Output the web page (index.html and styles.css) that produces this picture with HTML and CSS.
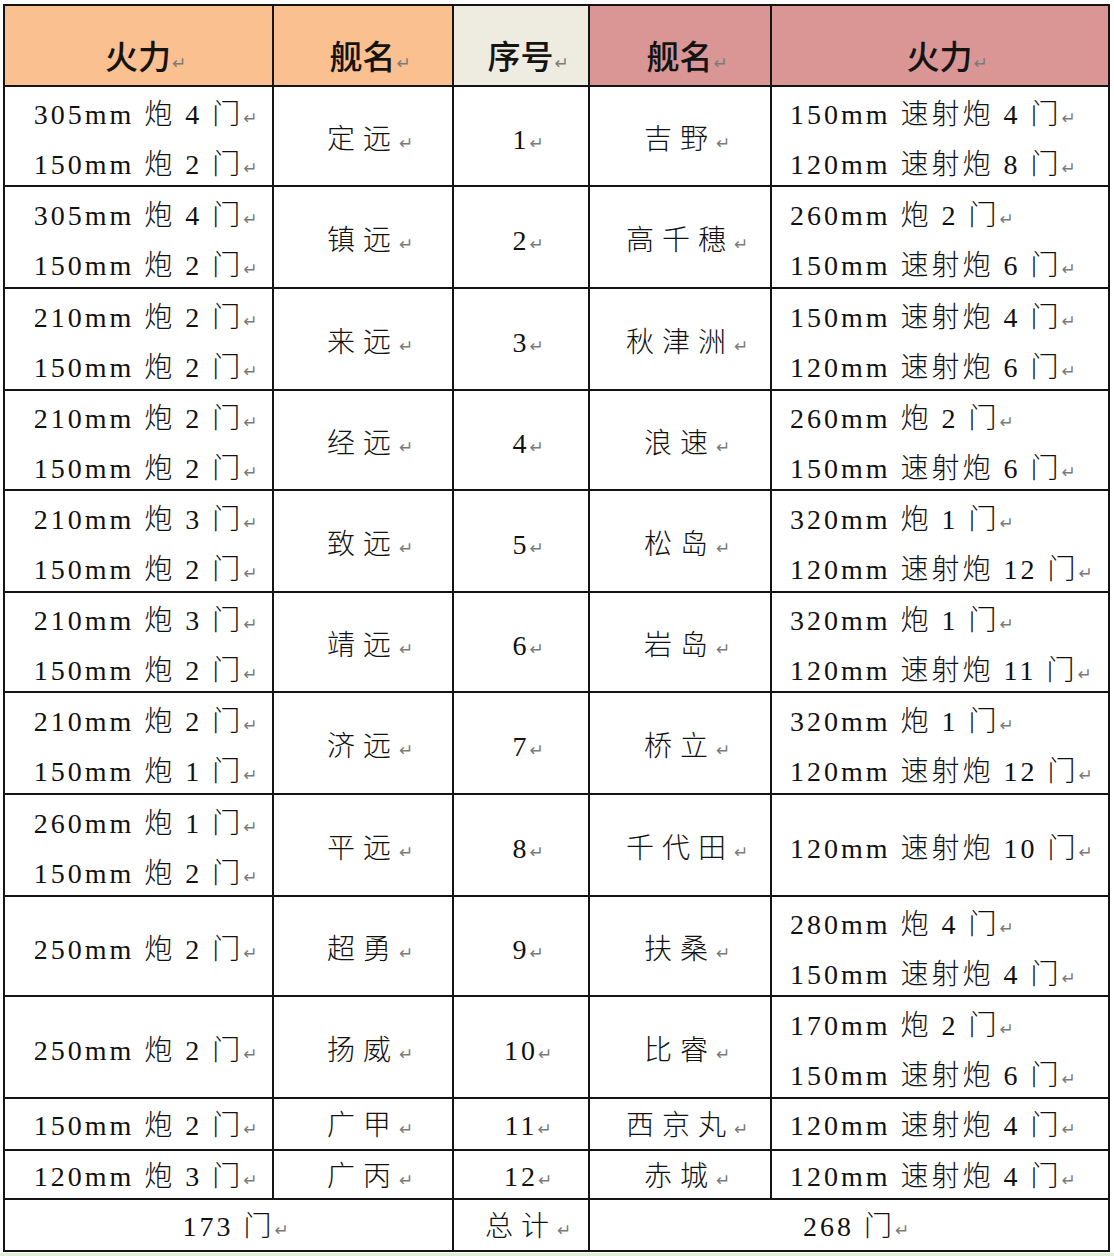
FILE: index.html
```html
<!DOCTYPE html>
<html lang="zh-CN">
<head>
<meta charset="utf-8">
<title>舰队火力对比</title>
<link rel="stylesheet" href="styles.css">
</head>
<body>
<div class="t">
  <div class="c h or"><div class="ln">火力<i class="pm">↵</i></div></div>
  <div class="c h or"><div class="ln">舰名<i class="pm">↵</i></div></div>
  <div class="c h bg"><div class="ln">序号<i class="pm">↵</i></div></div>
  <div class="c h rd"><div class="ln">舰名<i class="pm">↵</i></div></div>
  <div class="c h rd"><div class="ln">火力<i class="pm">↵</i></div></div>

  <div class="c"><div class="ln">305mm 炮 4 门<i class="pm">↵</i></div><div class="ln">150mm 炮 2 门<i class="pm">↵</i></div></div>
  <div class="c nm"><div class="ln">定远<i class="pm">↵</i></div></div>
  <div class="c"><div class="ln">1<i class="pm">↵</i></div></div>
  <div class="c nm"><div class="ln">吉野<i class="pm">↵</i></div></div>
  <div class="c l"><div class="ln">150mm 速射炮 4 门<i class="pm">↵</i></div><div class="ln">120mm 速射炮 8 门<i class="pm">↵</i></div></div>

  <div class="c"><div class="ln">305mm 炮 4 门<i class="pm">↵</i></div><div class="ln">150mm 炮 2 门<i class="pm">↵</i></div></div>
  <div class="c nm"><div class="ln">镇远<i class="pm">↵</i></div></div>
  <div class="c"><div class="ln">2<i class="pm">↵</i></div></div>
  <div class="c nm"><div class="ln">高千穗<i class="pm">↵</i></div></div>
  <div class="c l"><div class="ln">260mm 炮 2 门<i class="pm">↵</i></div><div class="ln">150mm 速射炮 6 门<i class="pm">↵</i></div></div>

  <div class="c"><div class="ln">210mm 炮 2 门<i class="pm">↵</i></div><div class="ln">150mm 炮 2 门<i class="pm">↵</i></div></div>
  <div class="c nm"><div class="ln">来远<i class="pm">↵</i></div></div>
  <div class="c"><div class="ln">3<i class="pm">↵</i></div></div>
  <div class="c nm"><div class="ln">秋津洲<i class="pm">↵</i></div></div>
  <div class="c l"><div class="ln">150mm 速射炮 4 门<i class="pm">↵</i></div><div class="ln">120mm 速射炮 6 门<i class="pm">↵</i></div></div>

  <div class="c"><div class="ln">210mm 炮 2 门<i class="pm">↵</i></div><div class="ln">150mm 炮 2 门<i class="pm">↵</i></div></div>
  <div class="c nm"><div class="ln">经远<i class="pm">↵</i></div></div>
  <div class="c"><div class="ln">4<i class="pm">↵</i></div></div>
  <div class="c nm"><div class="ln">浪速<i class="pm">↵</i></div></div>
  <div class="c l"><div class="ln">260mm 炮 2 门<i class="pm">↵</i></div><div class="ln">150mm 速射炮 6 门<i class="pm">↵</i></div></div>

  <div class="c"><div class="ln">210mm 炮 3 门<i class="pm">↵</i></div><div class="ln">150mm 炮 2 门<i class="pm">↵</i></div></div>
  <div class="c nm"><div class="ln">致远<i class="pm">↵</i></div></div>
  <div class="c"><div class="ln">5<i class="pm">↵</i></div></div>
  <div class="c nm"><div class="ln">松岛<i class="pm">↵</i></div></div>
  <div class="c l"><div class="ln">320mm 炮 1 门<i class="pm">↵</i></div><div class="ln">120mm 速射炮 12 门<i class="pm">↵</i></div></div>

  <div class="c"><div class="ln">210mm 炮 3 门<i class="pm">↵</i></div><div class="ln">150mm 炮 2 门<i class="pm">↵</i></div></div>
  <div class="c nm"><div class="ln">靖远<i class="pm">↵</i></div></div>
  <div class="c"><div class="ln">6<i class="pm">↵</i></div></div>
  <div class="c nm"><div class="ln">岩岛<i class="pm">↵</i></div></div>
  <div class="c l"><div class="ln">320mm 炮 1 门<i class="pm">↵</i></div><div class="ln">120mm 速射炮 11 门<i class="pm">↵</i></div></div>

  <div class="c"><div class="ln">210mm 炮 2 门<i class="pm">↵</i></div><div class="ln">150mm 炮 1 门<i class="pm">↵</i></div></div>
  <div class="c nm"><div class="ln">济远<i class="pm">↵</i></div></div>
  <div class="c"><div class="ln">7<i class="pm">↵</i></div></div>
  <div class="c nm"><div class="ln">桥立<i class="pm">↵</i></div></div>
  <div class="c l"><div class="ln">320mm 炮 1 门<i class="pm">↵</i></div><div class="ln">120mm 速射炮 12 门<i class="pm">↵</i></div></div>

  <div class="c"><div class="ln">260mm 炮 1 门<i class="pm">↵</i></div><div class="ln">150mm 炮 2 门<i class="pm">↵</i></div></div>
  <div class="c nm"><div class="ln">平远<i class="pm">↵</i></div></div>
  <div class="c"><div class="ln">8<i class="pm">↵</i></div></div>
  <div class="c nm"><div class="ln">千代田<i class="pm">↵</i></div></div>
  <div class="c l"><div class="ln">120mm 速射炮 10 门<i class="pm">↵</i></div></div>

  <div class="c"><div class="ln">250mm 炮 2 门<i class="pm">↵</i></div></div>
  <div class="c nm"><div class="ln">超勇<i class="pm">↵</i></div></div>
  <div class="c"><div class="ln">9<i class="pm">↵</i></div></div>
  <div class="c nm"><div class="ln">扶桑<i class="pm">↵</i></div></div>
  <div class="c l"><div class="ln">280mm 炮 4 门<i class="pm">↵</i></div><div class="ln">150mm 速射炮 4 门<i class="pm">↵</i></div></div>

  <div class="c"><div class="ln">250mm 炮 2 门<i class="pm">↵</i></div></div>
  <div class="c nm"><div class="ln">扬威<i class="pm">↵</i></div></div>
  <div class="c"><div class="ln">10<i class="pm">↵</i></div></div>
  <div class="c nm"><div class="ln">比睿<i class="pm">↵</i></div></div>
  <div class="c l"><div class="ln">170mm 炮 2 门<i class="pm">↵</i></div><div class="ln">150mm 速射炮 6 门<i class="pm">↵</i></div></div>

  <div class="c s"><div class="ln">150mm 炮 2 门<i class="pm">↵</i></div></div>
  <div class="c s nm"><div class="ln">广甲<i class="pm">↵</i></div></div>
  <div class="c s"><div class="ln">11<i class="pm">↵</i></div></div>
  <div class="c s nm"><div class="ln">西京丸<i class="pm">↵</i></div></div>
  <div class="c s l"><div class="ln">120mm 速射炮 4 门<i class="pm">↵</i></div></div>

  <div class="c s"><div class="ln">120mm 炮 3 门<i class="pm">↵</i></div></div>
  <div class="c s nm"><div class="ln">广丙<i class="pm">↵</i></div></div>
  <div class="c s"><div class="ln">12<i class="pm">↵</i></div></div>
  <div class="c s nm"><div class="ln">赤城<i class="pm">↵</i></div></div>
  <div class="c s l"><div class="ln">120mm 速射炮 4 门<i class="pm">↵</i></div></div>

  <div class="c s span2"><div class="ln">173 门<i class="pm">↵</i></div></div>
  <div class="c s nm"><div class="ln">总计<i class="pm">↵</i></div></div>
  <div class="c s span2"><div class="ln">268 门<i class="pm">↵</i></div></div>
</div>
<div class="strip"></div>
</body>
</html>
```
FILE: styles.css
```css
html, body {
  margin: 0;
  padding: 0;
  background: #ffffff;
}

.t {
  display: grid;
  grid-template-columns: 267px 178px 134px 180px 336px;
  grid-template-rows: 79px 98px 100px 100px 98px 100px 98px 100px 100px 98px 100px 50px 47px 50px;
  gap: 2px;
  padding: 2px;
  background: #141414;
  width: max-content;
  margin: 4px 0 0 3px;
}

.c {
  background: #ffffff;
  display: flex;
  flex-direction: column;
  justify-content: center;
  align-items: center;
  padding-top: 8px;
  box-sizing: border-box;
  font-family: "Liberation Serif", "Noto Sans CJK SC", serif;
  font-size: 28px;
  font-weight: 300;
  line-height: 50px;
  letter-spacing: 3px;
  color: #111111;
  white-space: nowrap;
}

.c.s {
  padding-top: 4px;
}

.c.l {
  align-items: flex-start;
  padding-left: 18px;
}

.c.nm {
  letter-spacing: 8px;
}

.c.span2 {
  grid-column: span 2;
}

.ln {
  display: block;
}

.h {
  font-family: "Noto Sans CJK SC", sans-serif;
  font-weight: 500;
  font-size: 33px;
  line-height: 40px;
  letter-spacing: 0;
  justify-content: flex-end;
  padding-top: 0;
  padding-bottom: 10px;
  color: #141414;
}

.or { background: #fac08f; }
.bg { background: #eeece1; }
.rd { background: #d99694; }

.pm {
  display: inline-block;
  width: 0;
  font-style: normal;
  font-weight: 400;
  font-family: "DejaVu Sans", sans-serif;
  font-size: 17px;
  letter-spacing: 0;
  color: #7a7a7a;
  line-height: 1;
}

.h .pm {
  margin-left: 1px;
}

.strip {
  height: 3px;
  margin-top: 1px;
  background: #e0efd6;
}
```
